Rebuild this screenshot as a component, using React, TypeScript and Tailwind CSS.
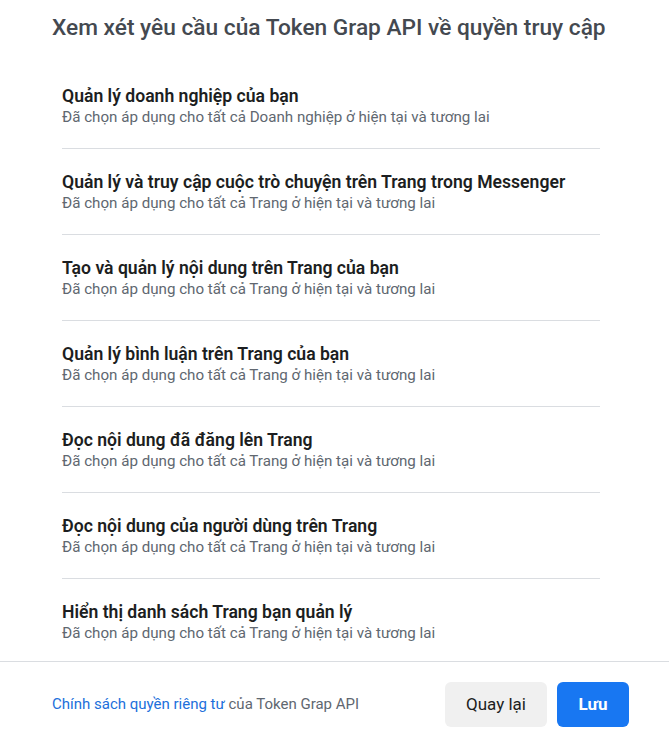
import React from "react";

const items = [
  { t: "Quản lý doanh nghiệp của bạn", s: "Đã chọn áp dụng cho tất cả Doanh nghiệp ở hiện tại và tương lai" },
  { t: "Quản lý và truy cập cuộc trò chuyện trên Trang trong Messenger", s: "Đã chọn áp dụng cho tất cả Trang ở hiện tại và tương lai" },
  { t: "Tạo và quản lý nội dung trên Trang của bạn", s: "Đã chọn áp dụng cho tất cả Trang ở hiện tại và tương lai" },
  { t: "Quản lý bình luận trên Trang của bạn", s: "Đã chọn áp dụng cho tất cả Trang ở hiện tại và tương lai" },
  { t: "Đọc nội dung đã đăng lên Trang", s: "Đã chọn áp dụng cho tất cả Trang ở hiện tại và tương lai" },
  { t: "Đọc nội dung của người dùng trên Trang", s: "Đã chọn áp dụng cho tất cả Trang ở hiện tại và tương lai" },
  { t: "Hiển thị danh sách Trang bạn quản lý", s: "Đã chọn áp dụng cho tất cả Trang ở hiện tại và tương lai" },
];

export default function App() {
  return (
    <div
      className="w-[669px] h-[748px] bg-white flex flex-col overflow-hidden"
      style={{ fontFamily: "Roboto, 'Liberation Sans', sans-serif" }}
    >
      <div className="pt-[14px] pb-[21px] pl-[52px] pr-[40px]">
        <h1 className="text-[22.7px] leading-[28px] font-medium text-[#444950] whitespace-nowrap">
          Xem xét yêu cầu của Token Grap API về quyền truy cập
        </h1>
      </div>
      <div className="flex-1 overflow-hidden pl-[62px] pr-[69px]">
        {items.map((it, i) => (
          <div key={i} className="pt-[22px] pb-[21px] border-b border-[#dadde1]">
            <div className="text-[17.6px] leading-[22px] font-semibold text-[#1c1e21] whitespace-nowrap">{it.t}</div>
            <div className="text-[15.15px] leading-[20px] text-[#606770] whitespace-nowrap">{it.s}</div>
          </div>
        ))}
      </div>
      <div className="border-t border-[#dadde1] pt-[20px] pb-[21px] pl-[52px] pr-[40px] flex items-center justify-between">
        <div className="text-[15px] text-[#606770]">
          <span className="text-[#216fdb]">Chính sách quyền riêng tư</span> của Token Grap API
        </div>
        <div className="flex gap-[10px]">
          <button className="h-[45px] w-[102px] rounded-[6px] bg-[#f0f0f0] text-[17px] text-[#1c1e21]">
            Quay lại
          </button>
          <button className="h-[45px] w-[72px] rounded-[6px] bg-[#1877f2] text-[17px] font-bold text-white">
            Lưu
          </button>
        </div>
      </div>
    </div>
  );
}
